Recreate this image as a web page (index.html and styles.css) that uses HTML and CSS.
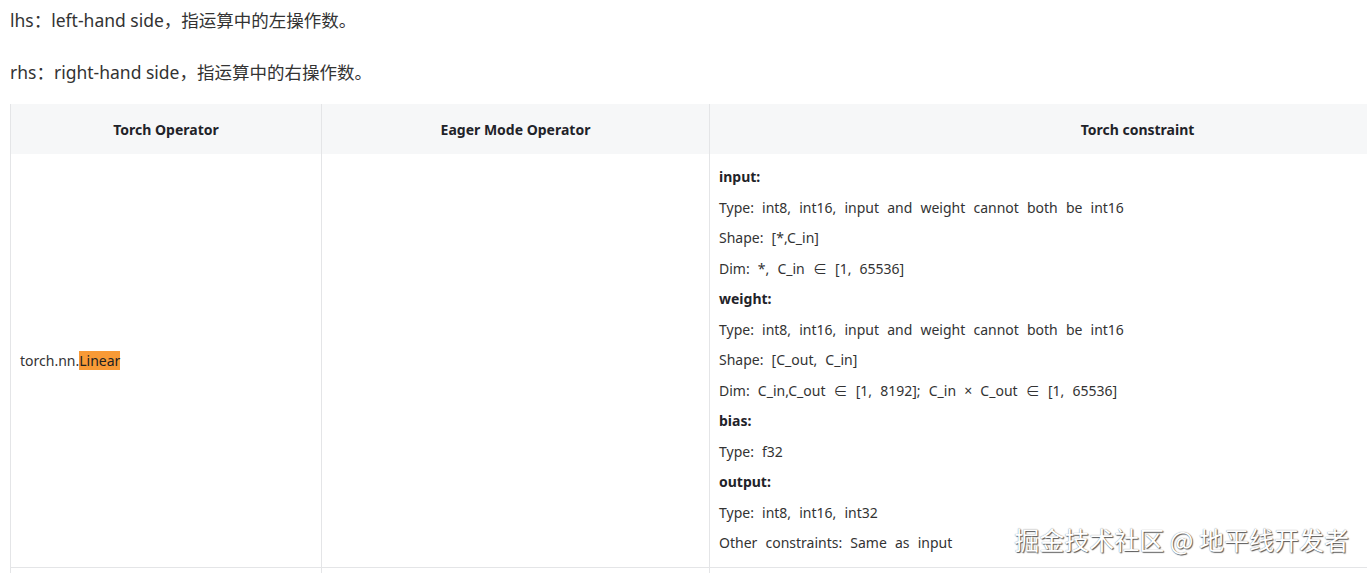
FILE: index.html
```html
<!DOCTYPE html>
<html lang="zh">
<head>
<meta charset="utf-8">
<link rel="stylesheet" href="styles.css">
</head>
<body>
<div class="page">
  <p class="para">lhs：left-hand side，指运算中的左操作数。</p>
  <p class="para">rhs：right-hand side，指运算中的右操作数。</p>
  <div class="table-wrap">
    <table class="ops">
      <thead>
        <tr>
          <th class="c1">Torch Operator</th>
          <th class="c2">Eager Mode Operator</th>
          <th class="c3">Torch constraint</th>
        </tr>
      </thead>
      <tbody>
        <tr>
          <td class="c1">torch.nn.<span class="hl">Linear</span></td>
          <td class="c2"></td>
          <td class="c3">
            <div class="ln"><b>input:</b></div>
            <div class="ln">Type: int8, int16, input and weight cannot both be int16</div>
            <div class="ln">Shape: [*,C_in]</div>
            <div class="ln">Dim: *, C_in ∈ [1, 65536]</div>
            <div class="ln"><b>weight:</b></div>
            <div class="ln">Type: int8, int16, input and weight cannot both be int16</div>
            <div class="ln">Shape: [C_out, C_in]</div>
            <div class="ln">Dim: C_in,C_out ∈ [1, 8192]; C_in × C_out ∈ [1, 65536]</div>
            <div class="ln"><b>bias:</b></div>
            <div class="ln">Type: f32</div>
            <div class="ln"><b>output:</b></div>
            <div class="ln">Type: int8, int16, int32</div>
            <div class="ln">Other constraints: Same as input</div>
          </td>
        </tr>
        <tr class="next">
          <td class="c1"></td>
          <td class="c2"></td>
          <td class="c3"></td>
        </tr>
      </tbody>
    </table>
  </div>
</div>
<div class="watermark">掘金技术社区 @ 地平线开发者</div>
</body>
</html>
```

FILE: styles.css
```css
html, body {
  margin: 0;
  padding: 0;
  background: #ffffff;
  overflow: hidden;
}
body {
  font-family: "Noto Sans", "Noto Sans CJK SC", sans-serif;
  color: #333333;
  width: 1367px;
  height: 573px;
  position: relative;
}
.page {
  padding: 6px 0 0 10px;
  height: 567px;
  overflow: hidden;
}
.para {
  margin: 0 0 24px 0;
  font-size: 17.5px;
  line-height: 28px;
  color: #333333;
}
.table-wrap {
  width: 1357px;
  overflow: hidden;
  margin-top: -6px;
}
.ops {
  border-collapse: collapse;
  width: 1556px;
  table-layout: fixed;
  font-size: 14px;
}
.ops th,
.ops td {
  box-sizing: border-box;
}
.ops th {
  background: #f6f7f8;
  height: 50px;
  padding: 0 10px;
  font-weight: 700;
  color: #1f2329;
  text-align: center;
  border-left: 1px solid #e4e5e7;
  border-right: 1px solid #e4e5e7;
}
.ops td {
  border: 1px solid #e4e5e7;
  border-top: none;
  padding: 8px 9px;
  vertical-align: middle;
  color: #333333;
}
.c1 { width: 311px; }
.c2 { width: 388px; }
.c3 { width: auto; }
.ln {
  line-height: 30.5px;
  word-spacing: 4.5px;
  white-space: nowrap;
}
.ln b {
  color: #1f2329;
}
.hl {
  background: #f89a36;
  color: #222222;
}
.next td {
  height: 20px;
}
.watermark {
  position: absolute;
  right: 18px;
  top: 521px;
  font-family: "Noto Sans CJK SC", sans-serif;
  font-size: 25px;
  line-height: 36px;
  color: #ffffff;
  text-shadow: 1px 1px 1px #555555, 0 0 1px #777777;
}
```
